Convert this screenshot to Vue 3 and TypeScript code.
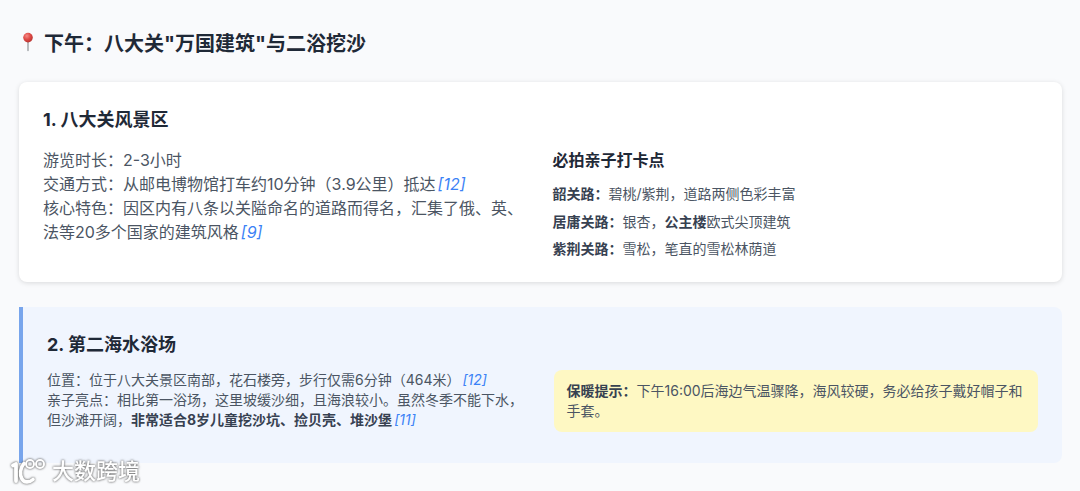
<script setup lang="ts">
const spots = [
  { name: '韶关路：', parts: [{ t: '碧桃/紫荆，道路两侧色彩丰富', b: false }] },
  { name: '居庸关路：', parts: [{ t: '银杏，', b: false }, { t: '公主楼', b: true }, { t: '欧式尖顶建筑', b: false }] },
  { name: '紫荆关路：', parts: [{ t: '雪松，笔直的雪松林荫道', b: false }] },
]
</script>

<template>
  <main class="page">
    <h2 class="title">
      <svg class="pin" width="16" height="20" viewBox="0 0 16 20" aria-hidden="true">
        <defs>
          <radialGradient id="ball" cx="0.38" cy="0.32" r="0.75">
            <stop offset="0" stop-color="#f58a86" />
            <stop offset="0.5" stop-color="#de4a46" />
            <stop offset="1" stop-color="#b3302e" />
          </radialGradient>
        </defs>
        <path d="M8 8v10.500" stroke="#a3a6aa" stroke-width="1.500" stroke-linecap="round" />
        <circle cx="8" cy="5.600" r="4.800" fill="url(#ball)" />
      </svg>
      <span>下午：八大关"万国建筑"与二浴挖沙</span>
    </h2>

    <section class="card">
      <h3 class="heading">1. 八大关风景区</h3>
      <div class="columns">
        <div class="intro">
          <p>游览时长：2-3小时</p>
          <p>交通方式：从邮电博物馆打车约10分钟（3.9公里）抵达<a class="ref">[12]</a></p>
          <p>核心特色：因区内有八条以关隘命名的道路而得名，汇集了俄、英、法等20多个国家的建筑风格<a class="ref">[9]</a></p>
        </div>
        <div>
          <h4 class="subheading">必拍亲子打卡点</h4>
          <ul class="spots">
            <li v-for="spot in spots" :key="spot.name">
              <strong>{{ spot.name }}</strong><template v-for="part in spot.parts" :key="part.t"><strong v-if="part.b">{{ part.t }}</strong><template v-else>{{ part.t }}</template></template>
            </li>
          </ul>
        </div>
      </div>
    </section>

    <section class="beach">
      <h3 class="heading">2. 第二海水浴场</h3>
      <div class="columns beach-columns">
        <div class="beach-text">
          <p>位置：位于八大关景区南部，花石楼旁，步行仅需6分钟（464米）<a class="ref">[12]</a></p>
          <p>亲子亮点：相比第一浴场，这里坡缓沙细，且海浪较小。虽然冬季不能下水，但沙滩开阔，<strong>非常适合8岁儿童挖沙坑、捡贝壳、堆沙堡</strong><a class="ref">[11]</a></p>
        </div>
        <aside class="note"><strong>保暖提示：</strong>下午16:00后海边气温骤降，海风较硬，务必给孩子戴好帽子和手套。</aside>
      </div>
    </section>

    <div class="watermark">
      <svg width="40" height="28" viewBox="0 0 40 28" fill="none" aria-hidden="true">
        <path d="M4 8.500 7 7v17" stroke="#fff" stroke-width="3.800" stroke-linecap="round" stroke-linejoin="round" />
        <path d="M24 22.500c-4 3.500-9 3-11-.5C10.500 17.500 11 11 15 6.500" stroke="#fff" stroke-width="3.600" stroke-linecap="round" />
        <circle cx="21" cy="7" r="4" stroke="#fff" stroke-width="2" />
        <circle cx="31" cy="7" r="4" stroke="#fff" stroke-width="2" />
      </svg>
      <span>大数跨境</span>
    </div>
  </main>
</template>

<style>
html, body {
  margin: 0;
  background: #f9fafc;
}
</style>

<style scoped>
.page {
  position: relative;
  width: 1080px;
  height: 491px;
  overflow: hidden;
  box-sizing: border-box;
  padding: 30px 18px 0 19px;
  font-family: Inter, "Noto Sans CJK SC", sans-serif;
  color: #4b5563;
  background: #f9fafc;
}
p, h2, h3, h4, ul {
  margin: 0;
  padding: 0;
}
.title {
  display: flex;
  align-items: center;
  gap: 8px;
  height: 28px;
  font-size: 20px;
  font-weight: 700;
  line-height: 28px;
  color: #1f2937;
}
.pin {
  flex: none;
  margin: -4px 0 0 1px;
}
.card {
  box-sizing: border-box;
  height: 200px;
  margin-top: 24px;
  padding: 24px;
  background: #fff;
  border-radius: 8px;
  box-shadow: 0 1px 5px rgba(0, 0, 0, 0.13);
}
.heading {
  font-size: 18px;
  font-weight: 700;
  line-height: 28px;
  color: #1f2937;
}
.columns {
  display: grid;
  grid-template-columns: 1fr 1fr;
  column-gap: 24px;
}
.intro {
  margin-top: 14px;
  font-size: 16px;
  line-height: 24px;
}
.subheading {
  margin-top: 14px;
  font-size: 16px;
  font-weight: 700;
  line-height: 24px;
  color: #1f2937;
}
.spots {
  margin-top: 8px;
  list-style: none;
  font-size: 14px;
  line-height: 27.500px;
}
strong {
  font-weight: 700;
  color: #374151;
}
.ref {
  margin-left: 2px;
  font-style: italic;
  color: #3b82f6;
}
.beach {
  box-sizing: border-box;
  height: 156px;
  margin-top: 25px;
  padding: 24px 24px 0;
  background: #f0f5fe;
  border-left: 4px solid #78a5ec;
  border-radius: 0 8px 8px 0;
}
.beach-columns {
  margin-top: 11px;
  align-items: start;
}
.beach-text {
  font-size: 14px;
  line-height: 20px;
  color: #4b5563;
}
.note {
  margin-left: -1px;
  padding: 11px 12px 11px 13px;
  font-size: 14px;
  line-height: 20px;
  background: #fef8c3;
  border-radius: 8px;
}
.watermark {
  position: absolute;
  left: 9px;
  top: 457px;
  display: flex;
  align-items: center;
  gap: 3px;
  font-size: 22px;
  font-weight: 500;
  line-height: 28px;
  color: #fff;
  filter: drop-shadow(0 0 1px rgba(60, 60, 60, 0.75)) drop-shadow(0 0 1px rgba(120, 120, 120, 0.4));
}
</style>
